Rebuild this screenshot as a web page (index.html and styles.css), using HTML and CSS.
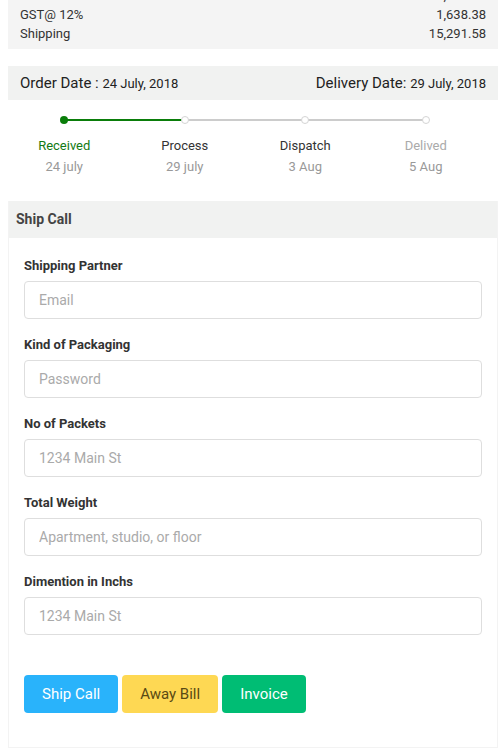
FILE: index.html
```html
<!DOCTYPE html>
<html lang="en">
<head>
    <meta charset="UTF-8">
    <meta name="viewport" content="width=device-width, initial-scale=1.0">
    <title>Order Details</title>
    <link rel="stylesheet" href="styles.css">
</head>
<body>
    <div class="page">
        <div class="totals">
            <div class="row"><span>Sub Total</span><span>13,653.20</span></div>
            <div class="row"><span>GST@ 12%</span><span>1,638.38</span></div>
            <div class="row"><span>Shipping</span><span>15,291.58</span></div>
        </div>

        <div class="dates">
            <div>Order Date : <small>24 July, 2018</small></div>
            <div>Delivery Date: <small>29 July, 2018</small></div>
        </div>

        <div class="stepper">
            <div class="track"><div class="done"></div></div>
            <div class="step active">
                <span class="dot"></span>
                <p class="name">Received</p>
                <p class="when">24 july</p>
            </div>
            <div class="step">
                <span class="dot"></span>
                <p class="name">Process</p>
                <p class="when">29 july</p>
            </div>
            <div class="step">
                <span class="dot"></span>
                <p class="name">Dispatch</p>
                <p class="when">3 Aug</p>
            </div>
            <div class="step muted">
                <span class="dot"></span>
                <p class="name">Delived</p>
                <p class="when">5 Aug</p>
            </div>
        </div>

        <div class="card">
            <div class="card-head">Ship Call</div>
            <form class="card-body">
                <label for="partner">Shipping Partner</label>
                <input type="text" id="partner" placeholder="Email">
                <label for="packaging">Kind of Packaging</label>
                <input type="text" id="packaging" placeholder="Password">
                <label for="packets">No of Packets</label>
                <input type="text" id="packets" placeholder="1234 Main St">
                <label for="weight">Total Weight</label>
                <input type="text" id="weight" placeholder="Apartment, studio, or floor">
                <label for="dims">Dimention in Inchs</label>
                <input type="text" id="dims" placeholder="1234 Main St">

                <div class="actions">
                    <button type="button" class="btn blue">Ship Call</button>
                    <button type="button" class="btn yellow">Away Bill</button>
                    <button type="button" class="btn green">Invoice</button>
                </div>
            </form>
        </div>
    </div>
</body>
</html>
```

FILE: styles.css
```css
body {
    margin: 0;
    background-color: #ffffff;
    font-family: Roboto, "Liberation Sans", sans-serif;
    color: #333333;
}

.page {
    padding: 0 2px 0 8px;
}

.totals {
    background-color: #f4f4f4;
    margin-top: -14px;
    padding: 0 12px 6px 12px;
    font-size: 13px;
    color: #333333;
}

.row {
    display: flex;
    justify-content: space-between;
    line-height: 19px;
}

.dates {
    margin-top: 17px;
    height: 34px;
    background-color: #f1f2f1;
    display: flex;
    justify-content: space-between;
    align-items: center;
    padding: 0 12px;
    font-size: 15px;
    color: #222222;
}

.dates small {
    font-size: 13px;
}

.stepper {
    position: relative;
    display: grid;
    grid-template-columns: repeat(4, 1fr);
    margin: 0 12px 0 -4px;
    padding-top: 16px;
    height: 101px;
    box-sizing: border-box;
}

.track {
    position: absolute;
    top: 19px;
    left: 12.5%;
    right: 12.5%;
    height: 2px;
    background-color: #cccccc;
}

.track .done {
    width: 33.4%;
    height: 100%;
    background-color: #0a7d0a;
}

.step {
    position: relative;
    text-align: center;
    font-size: 13px;
}

.dot {
    display: block;
    width: 6px;
    height: 6px;
    margin: 0 auto;
    border: 1px solid #d4d4d4;
    border-radius: 50%;
    background-color: #ffffff;
}

.step.active .dot {
    width: 8px;
    height: 8px;
    border: none;
    background-color: #0a7d0a;
}

.name {
    margin: 14px 0 0;
    line-height: 16px;
    color: #333333;
}

.when {
    margin: 5px 0 0;
    line-height: 16px;
    color: #999999;
}

.step.active .name {
    color: #137a13;
}

.step.muted .name {
    color: #aaaaaa;
}

.card {
    border: 1px solid #f3f3f3;
    border-top: none;
}

.card-head {
    background-color: #f1f2f1;
    height: 37px;
    line-height: 37px;
    padding: 0 7px;
    font-size: 14px;
    font-weight: bold;
    color: #444444;
}

.card-body {
    display: flex;
    flex-direction: column;
    padding: 20px 15px 34px 15px;
}

.card-body label {
    font-size: 13px;
    font-weight: bold;
    line-height: 16px;
    color: #333333;
    margin-bottom: 7px;
}

.card-body input {
    height: 38px;
    box-sizing: border-box;
    border: 1px solid #dedede;
    border-radius: 4px;
    padding: 0 14px;
    font-family: Roboto, "Liberation Sans", sans-serif;
    font-size: 14px;
    margin-bottom: 18px;
}

.card-body input::placeholder {
    color: #aaaaaa;
}

.actions {
    display: flex;
    gap: 4px;
    margin-top: 22px;
}

.btn {
    height: 38px;
    border: none;
    border-radius: 4px;
    padding: 0 18px;
    font-family: Roboto, "Liberation Sans", sans-serif;
    font-size: 15px;
    color: #ffffff;
}

.btn.blue {
    background-color: #29b3fb;
}

.btn.yellow {
    background-color: #fed853;
    color: #5a4a14;
}

.btn.green {
    background-color: #00bd74;
}
```
